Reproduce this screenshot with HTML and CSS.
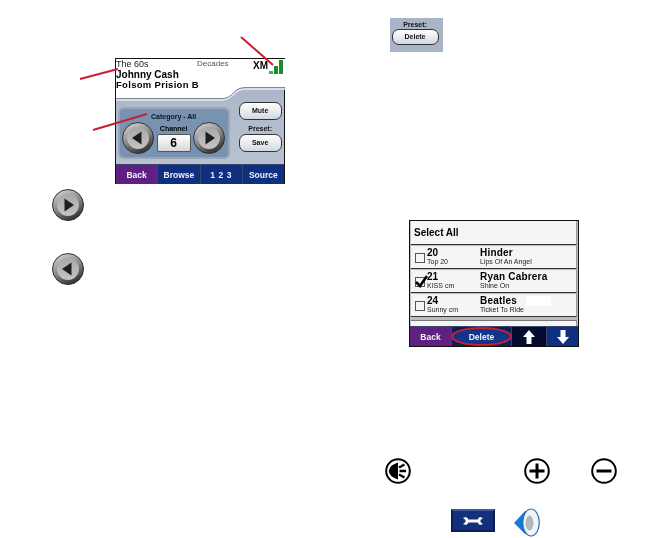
FILE: index.html
```html
<!DOCTYPE html>
<html lang="en">
<head>
    <meta charset="UTF-8">
    <meta name="viewport" content="width=device-width, initial-scale=1.0">
    <title>XM Radio Presets</title>
    <link rel="stylesheet" href="styles.css">
</head>
<body>
    <svg class="defs" width="0" height="0">
        <defs>
            <linearGradient id="ring" x1="0.2" y1="0" x2="0.7" y2="1">
                <stop offset="0" stop-color="#d2d2d2"/>
                <stop offset="0.5" stop-color="#8a8a8a"/>
                <stop offset="1" stop-color="#2a2a2a"/>
            </linearGradient>
            <linearGradient id="face" x1="0" y1="0" x2="0" y2="1">
                <stop offset="0" stop-color="#a8a8a8"/>
                <stop offset="1" stop-color="#c4c4c4"/>
            </linearGradient>
            <symbol id="arrow-right" viewBox="0 0 32 32">
                <circle cx="16" cy="16" r="15.5" fill="url(#ring)" stroke="#333" stroke-width="1"/>
                <circle cx="16" cy="16" r="11" fill="url(#face)"/>
                <path d="M12.5 9.5 L22 16 L12.5 22.5 Z" fill="#1c1c24"/>
            </symbol>
            <symbol id="arrow-left" viewBox="0 0 32 32">
                <circle cx="16" cy="16" r="15.5" fill="url(#ring)" stroke="#333" stroke-width="1"/>
                <circle cx="16" cy="16" r="11" fill="url(#face)"/>
                <path d="M19.5 9.5 L10 16 L19.5 22.5 Z" fill="#1c1c24"/>
            </symbol>
        </defs>
    </svg>

    <div class="page">
        <section class="col-left">
            <div class="screen">
                <div class="screen-main">
                    <svg class="wave" viewBox="0 0 169 105" width="169" height="105">
                        <path d="M-1 41 H106 C118 41 116 30 130 30 H170" fill="none" stroke="#e8ecf2" stroke-width="1.5"/>
                        <path d="M-1 39.5 H106 C118 39.5 116 28.5 130 28.5 H170 V-1 H-1 Z" fill="#fff" stroke="#7d8798" stroke-width="1"/>
                    </svg>
                    <div class="now-playing">
                        <div class="np-top">
                            <span class="np-cat">The 60s</span>
                            <span class="np-channel">Decades</span>
                            <span class="np-xm">XM</span>
                            <span class="signal">
                                <i class="bar bar-1"></i>
                                <i class="bar bar-2"></i>
                                <i class="bar bar-3"></i>
                            </span>
                        </div>
                        <div class="np-artist">Johnny Cash</div>
                        <div class="np-song">Folsom Prision B</div>
                    </div>
                    <div class="controls">
                        <div class="tuner">
                            <div class="tuner-title">Category - All</div>
                            <div class="tuner-row">
                                <svg class="arrow" width="32" height="32"><use href="#arrow-left"/></svg>
                                <div class="channel">
                                    <span class="channel-label">Channel</span>
                                    <span class="channel-box">6</span>
                                </div>
                                <svg class="arrow" width="32" height="32"><use href="#arrow-right"/></svg>
                            </div>
                        </div>
                        <div class="side-btns">
                            <span class="pill">Mute</span>
                            <span class="side-label">Preset:</span>
                            <span class="pill">Save</span>
                        </div>
                    </div>
                </div>
                <div class="tabs tabs-main">
                    <span class="tab tab-back">Back</span>
                    <span class="tab">Browse</span>
                    <span class="tab tab-num">1 2 3</span>
                    <span class="tab">Source</span>
                </div>
            </div>

            <svg class="big-arrow first" width="32" height="32"><use href="#arrow-right"/></svg>
            <svg class="big-arrow second" width="32" height="32"><use href="#arrow-left"/></svg>
        </section>

        <section class="col-right">
            <div class="preset-chip">
                <span class="side-label">Preset:</span>
                <span class="pill">Delete</span>
            </div>

            <div class="screen list-screen">
                <div class="list">
                    <div class="list-row select-all">Select All</div>
                    <div class="list-row">
                        <span class="check"></span>
                        <div class="cell-num"><b>20</b><small>Top 20</small></div>
                        <div class="cell-name"><b>Hinder</b><small>Lips Of An Angel</small></div>
                    </div>
                    <div class="list-row">
                        <span class="check">
                            <svg viewBox="0 0 13 13" width="13" height="13"><path d="M1 7 L5 11 L12 1" fill="none" stroke="#000" stroke-width="2.6"/></svg>
                        </span>
                        <div class="cell-num"><b>21</b><small>KISS cm</small></div>
                        <div class="cell-name"><b>Ryan Cabrera</b><small>Shine On</small></div>
                    </div>
                    <div class="list-row">
                        <span class="check"></span>
                        <div class="cell-num"><b>24</b><small>Sunny cm</small></div>
                        <div class="cell-name cell-short"><b>Beatles</b><small>Ticket To Ride</small></div>
                        <span class="blank-patch"></span>
                    </div>
                    <div class="list-row list-row-cut"></div>
                </div>
                <div class="tabs tabs-list">
                    <span class="tab tab-back">Back</span>
                    <span class="tab tab-delete">Delete</span>
                    <span class="tab tab-up">
                        <svg viewBox="0 0 12 14" width="12" height="14"><path d="M6 0 L12 7 H8.5 V14 H3.5 V7 H0 Z" fill="#fff"/></svg>
                    </span>
                    <span class="tab tab-down">
                        <svg viewBox="0 0 12 14" width="12" height="14"><path d="M6 14 L12 7 H8.5 V0 H3.5 V7 H0 Z" fill="#fff"/></svg>
                    </span>
                </div>
            </div>

            <div class="icon-row">
                <svg class="round-icon speaker" viewBox="0 0 26 26" width="26" height="26">
                    <circle cx="13" cy="13" r="11.8" fill="#fff" stroke="#000" stroke-width="2"/>
                    <path d="M4 13 C4 9 8 6 13 4.5 V21.5 C8 20 4 17 4 13 Z" fill="#000"/>
                    <path d="M14 9.5 L19.5 6.5 M14.5 13 H21 M14 16.5 L19.5 19.5" stroke="#000" stroke-width="2.3"/>
                </svg>
                <svg class="round-icon plus" viewBox="0 0 26 26" width="26" height="26">
                    <circle cx="13" cy="13" r="11.8" fill="#fff" stroke="#000" stroke-width="2"/>
                    <path d="M13 5.5 V20.5 M5.5 13 H20.5" stroke="#000" stroke-width="3"/>
                </svg>
                <svg class="round-icon minus" viewBox="0 0 26 26" width="26" height="26">
                    <circle cx="13" cy="13" r="11.8" fill="#fff" stroke="#000" stroke-width="2"/>
                    <path d="M5.5 13 H20.5" stroke="#000" stroke-width="3"/>
                </svg>
            </div>

            <div class="tool-row">
                <span class="wrench-btn">
                    <svg viewBox="0 0 20 8" width="20" height="8">
                        <path d="M0 1 L3 0 L5 1.5 L5 2.5 H15 V1.5 L17 0 L20 1 L17.5 3 V5 L20 7 L17 8 L15 6.5 V5.5 H5 V6.5 L3 8 L0 7 L2.5 5 V3 Z" fill="#fff"/>
                    </svg>
                </span>
                <svg class="volume" viewBox="0 0 26 29" width="26" height="29">
                    <path d="M0 15 L11 3 L14 3 L14 26 L11 26 Z" fill="#1a78d8"/>
                    <ellipse cx="17" cy="14.5" rx="8.3" ry="13.5" fill="#f0f5fa" stroke="#2a6aa8" stroke-width="1.2"/>
                    <ellipse cx="15.5" cy="15" rx="4" ry="7.5" fill="#b4b8bc"/>
                </svg>
            </div>
        </section>

        <svg class="callouts" width="649" height="538">
            <path d="M80 79 L118 69 M93 130 L147 114 M241 37 L273 65" stroke="#c8202e" stroke-width="2"/>
        </svg>
    </div>
</body>
</html>
```

FILE: styles.css
```css
* {
    box-sizing: border-box;
}
body {
    margin: 0;
    background: #fff;
    color: #000;
    font-family: "Liberation Sans", Arial, sans-serif;
}
.defs {
    position: absolute;
}
.page {
    position: relative;
    width: 649px;
    height: 538px;
    overflow: hidden;
    display: grid;
    grid-template-columns: 324px 325px;
}
.callouts {
    position: absolute;
    top: 0;
    left: 0;
    pointer-events: none;
}

/* device screens */
.screen {
    width: 170px;
    border: 1px solid #111;
    border-bottom: 0;
    background: #fff;
    filter: blur(0.3px);
}
.col-left .screen {
    margin: 58px 0 0 115px;
}
.screen-main {
    position: relative;
    height: 105px;
    background: linear-gradient(#a6b2c6, #b8c2d0);
}
.wave {
    position: absolute;
    top: 0;
    left: 0;
}
.now-playing {
    position: relative;
    height: 44px;
}
.np-top {
    display: flex;
    align-items: flex-start;
    height: 10px;
    font-size: 9px;
    line-height: 10px;
    color: #222;
}
.np-cat {
    width: 81px;
}
.np-channel {
    width: 56px;
    color: #555;
    font-size: 8px;
}
.np-xm {
    font-weight: bold;
    font-size: 10px;
    color: #000;
    width: 16px;
    line-height: 14px;
}
.signal {
    display: flex;
    align-items: flex-end;
    gap: 1px;
    height: 15px;
}
.bar {
    display: block;
    width: 4px;
    background: #1f8a2c;
}
.bar-1 {
    height: 3px;
    background: #2fc23c;
}
.bar-2 {
    height: 8px;
}
.bar-3 {
    height: 14px;
}
.np-artist {
    font-size: 10px;
    font-weight: bold;
    line-height: 11px;
}
.np-song {
    font-size: 9.5px;
    font-weight: bold;
    line-height: 10px;
    letter-spacing: 0.3px;
}
.controls {
    position: relative;
    display: flex;
    padding: 0 2px;
}
.tuner {
    width: 113px;
    height: 52px;
    margin-top: 4px;
    border: 2px solid #9aa6b6;
    border-radius: 6px;
    background: #7892b2;
    padding: 3px 3px 0 2px;
}
.tuner-title {
    text-align: center;
    font-size: 7px;
    font-weight: bold;
    line-height: 9px;
    color: #111;
}
.tuner-row {
    display: flex;
    justify-content: space-between;
    margin-top: 1px;
}
.channel {
    display: flex;
    flex-direction: column;
    align-items: center;
    padding-top: 2px;
}
.channel-label {
    font-size: 7px;
    font-weight: bold;
    line-height: 9px;
}
.channel-box {
    width: 34px;
    height: 18px;
    margin-top: 1px;
    border: 1px solid #555;
    border-radius: 2px;
    background: linear-gradient(#fff, #d8d8d8);
    text-align: center;
    font-size: 12px;
    font-weight: bold;
    line-height: 16px;
}
.side-btns {
    width: 44px;
    margin: -1px 0 0 8px;
    display: flex;
    flex-direction: column;
    align-items: center;
}
.pill {
    display: block;
    width: 43px;
    height: 18px;
    border: 1px solid #333;
    border-radius: 7px;
    background: linear-gradient(#fff, #d3d8e4);
    text-align: center;
    font-size: 7px;
    font-weight: bold;
    line-height: 16px;
    color: #111;
}
.side-label {
    display: block;
    font-size: 7px;
    font-weight: bold;
    line-height: 9px;
    color: #111;
}
.side-btns .side-label {
    margin: 4px 0 1px;
}

/* bottom tabs */
.tabs {
    display: flex;
    gap: 1px;
    height: 20px;
    padding-top: 1px;
    background: #3a4468;
}
.tab {
    display: flex;
    align-items: center;
    justify-content: center;
    flex: 1;
    background: #0f2f80;
    color: #f0f0f6;
    font-size: 8.5px;
    font-weight: bold;
}
.tab-back {
    background: #5e2182;
}
.tab-num {
    letter-spacing: 0.6px;
}

/* big arrows */
.big-arrow {
    display: block;
    margin-left: 52px;
}
.big-arrow.first {
    margin-top: 5px;
}
.big-arrow.second {
    margin-top: 32px;
}

/* right column */
.preset-chip {
    width: 53px;
    height: 34px;
    margin: 18px 0 0 66px;
    padding: 2px 0 0 1px;
    background: #a9b4c6;
    display: flex;
    flex-direction: column;
    align-items: center;
    filter: blur(0.3px);
}
.preset-chip .pill {
    width: 47px;
    height: 16px;
    line-height: 14px;
    margin-right: 4px;
}
.preset-chip .side-label {
    margin-right: 4px;
}
.list-screen {
    margin: 168px 0 0 85px;
    border-bottom: 1px solid #111;
}
.list {
    height: 105px;
    overflow: hidden;
    background: #b8bec8;
    padding: 0 1px;
}
.list-row {
    display: flex;
    align-items: center;
    height: 23px;
    margin-bottom: 1px;
    background: #f5f5f5;
    border-bottom: 1px solid #333;
    border-right: 1px solid #999;
}
.select-all {
    height: 24px;
    padding-left: 3px;
    font-size: 10px;
    font-weight: bold;
}
.list-row-cut {
    height: 12px;
    margin-top: 3px;
    border-top: 1px solid #777;
}
.check {
    position: relative;
    width: 10px;
    height: 10px;
    margin: 2px 2px 0 4px;
    border: 1px solid #555;
    flex: none;
}
.check svg {
    position: absolute;
    top: -3px;
    left: -1px;
}
.cell-num {
    width: 53px;
}
.cell-num b,
.cell-name b {
    display: block;
    font-size: 10px;
    line-height: 10px;
}
.cell-name b {
    letter-spacing: 0.2px;
}
.cell-num small,
.cell-name small {
    display: block;
    font-size: 7px;
    line-height: 8px;
    color: #222;
}
.cell-short {
    width: 46px;
}
.blank-patch {
    width: 25px;
    height: 10px;
    align-self: flex-start;
    margin-top: 2px;
    background: #fff;
}
.tabs-list .tab {
    flex: none;
}
.tabs-list .tab-back {
    width: 41px;
}
.tab-delete {
    position: relative;
    width: 59px;
    background: #0b1f5c;
    z-index: 0;
}
.tab-delete::after {
    content: "";
    position: absolute;
    inset: 0 -1px;
    border: 2px solid #c8202e;
    border-radius: 50%;
    background: #12348a;
    z-index: -1;
}
.tab-up {
    width: 34px;
    background: #060b30;
}
.tabs-list .tab-down {
    flex: 1;
}

/* icons at the foot */
.icon-row {
    display: flex;
    margin: 111px 0 0 61px;
    height: 26px;
}
.plus {
    margin-left: 113px;
}
.minus {
    margin-left: 41px;
}
.tool-row {
    display: flex;
    align-items: flex-start;
    margin: 25px 0 0 127px;
}
.wrench-btn {
    display: flex;
    align-items: center;
    justify-content: center;
    width: 44px;
    height: 23px;
    background: #12307c;
    border: 2px solid #0a1c50;
    border-top-color: #3a5a9c;
}
.volume {
    margin: -1px 0 0 19px;
}
```
